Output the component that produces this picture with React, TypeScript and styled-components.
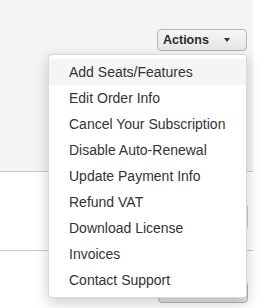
import styled, {createGlobalStyle} from "styled-components";

const GlobalStyle = createGlobalStyle`
  body {
    margin: 0;
    background: #fff;
    font-family: "Liberation Sans", Arial, sans-serif;
  }
`

const Page = styled.div`
  position: relative;
  width: 253px;
  height: 308px;
  overflow: visible;
`

const Header = styled.div`
  display: flex;
  justify-content: flex-end;
  height: 172px;
  padding: 29px 6px 0 0;
  box-sizing: border-box;
  background: #f4f4f4;
  border-bottom: 1px solid #c8c8c8;
`

const Section = styled.div<{ $height: number, $top: number, $last?: boolean }>`
  display: flex;
  justify-content: flex-end;
  align-items: flex-start;
  height: ${p => p.$height}px;
  padding: ${p => p.$top}px 5px 0 0;
  box-sizing: border-box;
  border-bottom: ${p => p.$last ? 'none' : '1px solid #c8c8c8'};
`

const ActionsButton = styled.button`
  display: flex;
  align-items: center;
  justify-content: space-between;
  width: 90px;
  height: 22px;
  padding: 0 16px 0 5px;
  box-sizing: border-box;
  border: 1px solid #b4b4b4;
  border-radius: 4px;
  background: linear-gradient(#f6f6f6, #e6e6e6);
  color: #2b2b2b;
  font-family: inherit;
  font-size: 12.5px;
  font-weight: bold;
`

const Caret = styled.span`
  width: 0;
  height: 0;
  border-left: 3.5px solid transparent;
  border-right: 3.5px solid transparent;
  border-top: 4px solid #333;
`

const Field = styled.div`
  width: 150px;
  height: 24px;
  border: 1px solid #ccc;
  border-radius: 3px;
  background: #fff;
`

const Menu = styled.ul`
  position: absolute;
  top: 54px;
  left: 48px;
  width: 199px;
  margin: 0;
  padding: 4px 0;
  box-sizing: border-box;
  list-style: none;
  background: #fff;
  border: 1px solid rgba(0, 0, 0, 0.15);
  border-radius: 4px;
  box-shadow: 0 5px 14px rgba(0, 0, 0, 0.2);
`

const MenuItem = styled.li<{ $active?: boolean }>`
  padding: 3px 20px;
  line-height: 20px;
  font-size: 14px;
  color: #333;
  white-space: nowrap;
  background: ${p => p.$active ? '#f5f5f5' : 'transparent'};
`

const items = [
    'Add Seats/Features',
    'Edit Order Info',
    'Cancel Your Subscription',
    'Disable Auto-Renewal',
    'Update Payment Info',
    'Refund VAT',
    'Download License',
    'Invoices',
    'Contact Support',
]

const App = () => {
    return <Page>
        <GlobalStyle/>
        <Header>
            <ActionsButton>Actions<Caret/></ActionsButton>
        </Header>
        <Section $height={79} $top={32}>
            <Field/>
        </Section>
        <Section $height={57} $top={30} $last>
            <ActionsButton>Actions<Caret/></ActionsButton>
        </Section>
        <Menu>
            {items.map((s, i) =>
                <MenuItem key={s} $active={i === 0}>{s}</MenuItem>
            )}
        </Menu>
    </Page>
}

export default App
